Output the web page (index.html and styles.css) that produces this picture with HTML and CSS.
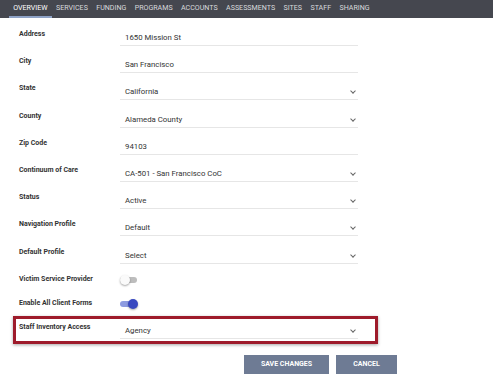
FILE: index.html
```html
<!DOCTYPE html>
<html lang="en">
<head>
    <meta charset="UTF-8">
    <meta name="viewport" content="width=device-width, initial-scale=1.0">
    <title>Agency Overview</title>
    <link rel="stylesheet" href="styles.css">
</head>
<body>
    <nav class="tabs">
        <a class="tab active">OVERVIEW</a>
        <a class="tab">SERVICES</a>
        <a class="tab">FUNDING</a>
        <a class="tab">PROGRAMS</a>
        <a class="tab">ACCOUNTS</a>
        <a class="tab">ASSESSMENTS</a>
        <a class="tab">SITES</a>
        <a class="tab">STAFF</a>
        <a class="tab">SHARING</a>
    </nav>

    <div class="form">
        <div class="row">
            <label>Address</label>
            <div class="field">1650 Mission St</div>
        </div>
        <div class="row">
            <label>City</label>
            <div class="field">San Francisco</div>
        </div>
        <div class="row">
            <label>State</label>
            <div class="field select">California</div>
        </div>
        <div class="row">
            <label>County</label>
            <div class="field select">Alameda County</div>
        </div>
        <div class="row">
            <label>Zip Code</label>
            <div class="field">94103</div>
        </div>
        <div class="row">
            <label>Continuum of Care</label>
            <div class="field select">CA-501 - San Francisco CoC</div>
        </div>
        <div class="row">
            <label>Status</label>
            <div class="field select">Active</div>
        </div>
        <div class="row">
            <label>Navigation Profile</label>
            <div class="field select">Default</div>
        </div>
        <div class="row">
            <label>Default Profile</label>
            <div class="field select">Select</div>
        </div>
        <div class="row toggle-row">
            <label>Victim Service Provider</label>
            <div class="switch"><span class="knob"></span></div>
        </div>
        <div class="row toggle-row">
            <label>Enable All Client Forms</label>
            <div class="switch on"><span class="knob"></span></div>
        </div>
        <div class="row highlight">
            <label>Staff Inventory Access</label>
            <div class="field select">Agency</div>
        </div>

        <div class="actions">
            <button class="btn">SAVE CHANGES</button>
            <button class="btn">CANCEL</button>
        </div>
    </div>
</body>
</html>
```

FILE: styles.css
```css
body {
    margin: 0;
    background: #fff;
    font-family: Roboto, "Liberation Sans", Arial, sans-serif;
    color: #333;
}
.tabs {
    display: flex;
    height: 18px;
    background: #45474f;
    padding-left: 9px;
}
.tab {
    font-size: 7.1px;
    line-height: 16px;
    color: #d8d9dc;
    padding: 0 4.2px;
    border-bottom: 2px solid transparent;
}
.tab.active {
    color: #fff;
    border-bottom-color: #8ea2c6;
}
.form {
    padding: 10px 0 0 19px;
}
.row {
    display: flex;
    height: 27.2px;
}
.row label {
    width: 101px;
    flex-shrink: 0;
    font-size: 7px;
    font-weight: bold;
    line-height: 12px;
    color: #333;
}
.field {
    position: relative;
    width: 233px;
    height: 12px;
    margin-top: 4px;
    padding: 0 0 1px 5px;
    font-size: 7.8px;
    line-height: 12px;
    color: #333;
    border-bottom: 1px solid #e6e6e6;
}
/* chevron on dropdowns */
.field.select::after {
    content: "";
    position: absolute;
    right: 3px;
    top: 3px;
    width: 3px;
    height: 3px;
    border-right: 1px solid #666;
    border-bottom: 1px solid #666;
    transform: rotate(45deg);
}
.toggle-row {
    height: 24px;
}
.switch {
    position: relative;
    width: 17px;
    height: 6px;
    margin-top: 4px;
    border-radius: 3px;
    background: #bdbdbd;
}
.switch .knob {
    position: absolute;
    left: 0;
    top: -2px;
    width: 10px;
    height: 10px;
    border-radius: 50%;
    background: #fafafa;
    box-shadow: 0 1px 2px rgba(0, 0, 0, 0.35);
}
.switch.on {
    background: #8d9be0;
}
.switch.on .knob {
    left: 8px;
    background: #3949c0;
}
.highlight {
    height: 22px;
    width: 356px;
    margin: -5px 0 0 -6px;
    padding-left: 3px;
    border: 3px solid #9e1b2b;
    box-shadow: 0 1px 3px rgba(0, 0, 0, 0.35);
}
.highlight label {
    padding-top: 2px;
}
.highlight .field {
    margin-top: 6px;
}
.actions {
    display: flex;
    justify-content: flex-end;
    gap: 7px;
    width: 378px;
    margin-top: 11px;
}
.btn {
    height: 19px;
    padding: 0;
    border: none;
    background: #6e7b94;
    color: #fff;
    font-family: Roboto, "Liberation Sans", Arial, sans-serif;
    font-size: 7px;
    font-weight: bold;
}
.btn:first-child {
    width: 85px;
}
.btn:last-child {
    width: 61px;
}
```
